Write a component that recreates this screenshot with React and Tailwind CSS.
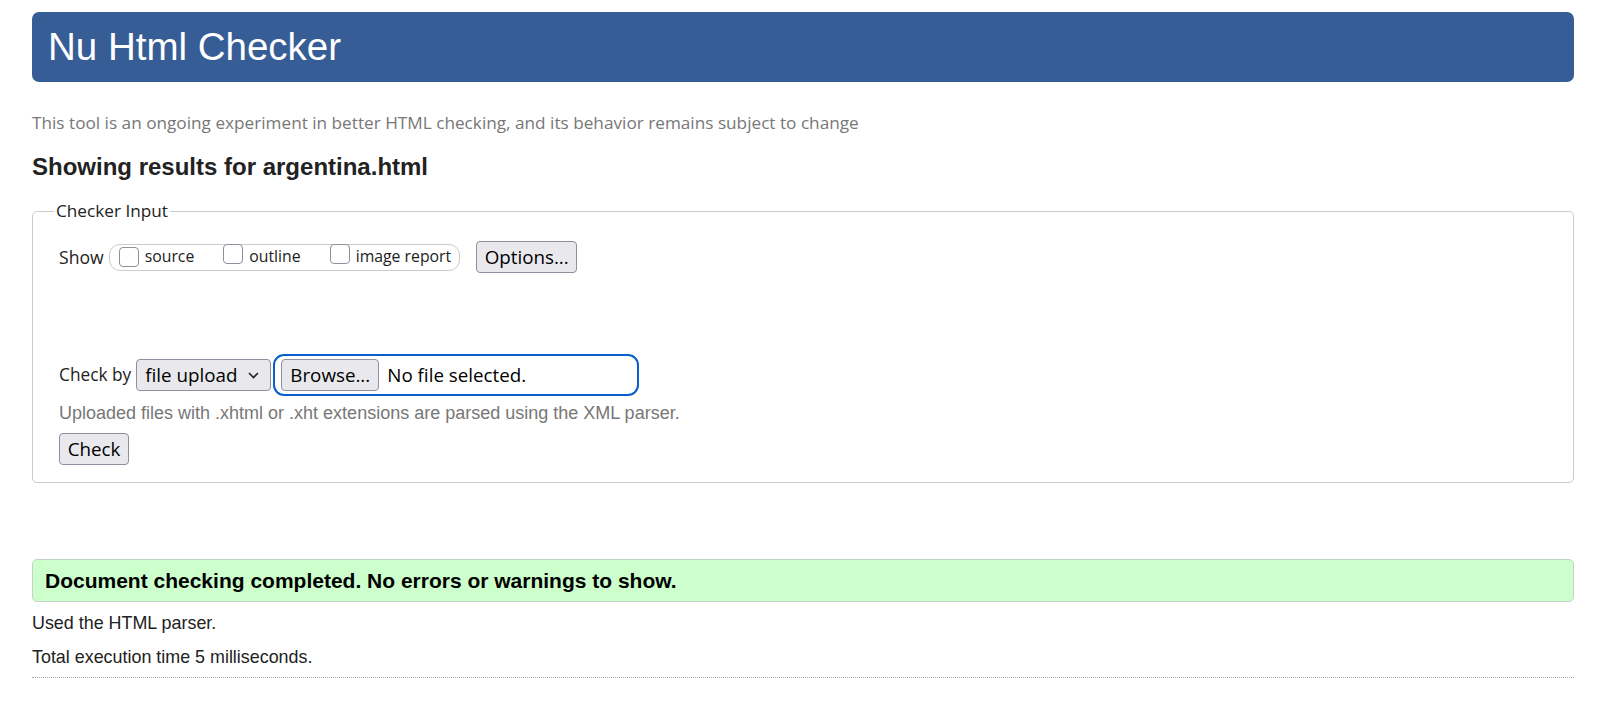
import React from "react";

const Checkbox = () => (
  <span className="inline-block w-[20px] h-[20px] border border-[#8f8f9d] rounded-[4px] bg-white shrink-0" />
);

const Btn = ({ children, className = "" }) => (
  <span
    className={
      "inline-flex items-center justify-center h-[32px] px-[9px] bg-[#e9e9ed] border border-[#8f8f9d] rounded-[4px] text-black text-[18.8px] font-['Open_Sans',sans-serif] " +
      className
    }
  >
    {children}
  </span>
);

export default function App() {
  return (
    <div className="bg-white min-h-[701px] pl-[32px] pr-[34px] pt-[12px] font-['Liberation_Sans',Arial,sans-serif] text-[#222]">
      <h1 className="h-[70px] bg-[#365d95] rounded-[7px] text-white text-[38.5px] leading-[70px] pl-[16px]">
        Nu Html Checker
      </h1>

      <p className="mt-[30px] text-[#777] text-[17.2px] leading-[22px] font-['Open_Sans',sans-serif]">
        This tool is an ongoing experiment in better HTML checking, and its behavior remains subject to change
      </p>

      <h2 className="mt-[18px] text-[24px] font-bold leading-[30px] text-[#222]">
        Showing results for argentina.html
      </h2>

      <fieldset className="mt-[18px] border border-[#ccc] rounded-[5px] pl-[21px] pr-[26px] pb-[17px]">
        <legend className="px-[2px] text-[17.2px] leading-[22px] text-[#222] font-['Open_Sans',sans-serif]">
          Checker Input
        </legend>

        <div className="pl-[5px] pt-[19px] font-['Open_Sans',sans-serif] text-[15.8px] text-[#222]">
          <div className="flex items-center h-[32px]">
            <span className="text-[17.6px]">Show</span>
            <div className="ml-[5px] h-[27px] border border-[#ccc] rounded-[11px] flex items-center pl-[9px] pr-[8px]">
              <Checkbox />
              <span className="ml-[6px]">source</span>
              <span className="ml-[29px]"><Checkbox /></span>
              <span className="ml-[6px]">outline</span>
              <span className="ml-[29px]"><Checkbox /></span>
              <span className="ml-[6px]">image report</span>
            </div>
            <Btn className="ml-[16px] w-[101px]">Options...</Btn>
          </div>

          <div className="mt-[86px] flex items-center h-[32px]">
            <span className="text-[17.3px]">Check by</span>
            <span className="ml-[5px] inline-flex items-center h-[32px] w-[135px] pl-[8px] bg-[#e9e9ed] border border-[#8f8f9d] rounded-[4px] text-black text-[18.8px]">
              <span>file upload</span>
              <svg className="ml-auto mr-[11px]" width="11" height="7" viewBox="0 0 11 7">
                <path d="M1 1 L5.5 5.5 L10 1" fill="none" stroke="#222" strokeWidth="1.6" />
              </svg>
            </span>
            <div className="ml-[7px] h-[32px] w-[356px] flex items-center outline-[2.5px] outline-solid outline-[#0a5fcf] outline-offset-[3px] rounded-[6px]">
              <Btn className="ml-[3px] w-[98px]">Browse...</Btn>
              <span className="ml-[8px] text-black text-[18.8px]">No file selected.</span>
            </div>
          </div>

          <p className="mt-[11px] leading-[22px] text-[#777] text-[18px] font-['Liberation_Sans',Arial,sans-serif]">
            Uploaded files with .xhtml or .xht extensions are parsed using the XML parser.
          </p>

          <div className="mt-[9px] flex">
            <Btn className="w-[70px] h-[31px]">Check</Btn>
          </div>
        </div>
      </fieldset>

      <div className="mt-[76px] h-[43px] bg-[#ccffcc] border border-[#c4d4c4] rounded-[5px] flex items-center pl-[12px]">
        <span className="text-[21px] font-bold text-black">
          Document checking completed. No errors or warnings to show.
        </span>
      </div>

      <p className="mt-[10px] text-[17.9px] leading-[22px] text-[#222]">Used the HTML parser.</p>
      <p className="mt-[12px] text-[17.9px] leading-[22px] text-[#222]">Total execution time 5 milliseconds.</p>
      <div className="mt-[9px] border-t border-dotted border-[#aaa]" />
    </div>
  );
}
